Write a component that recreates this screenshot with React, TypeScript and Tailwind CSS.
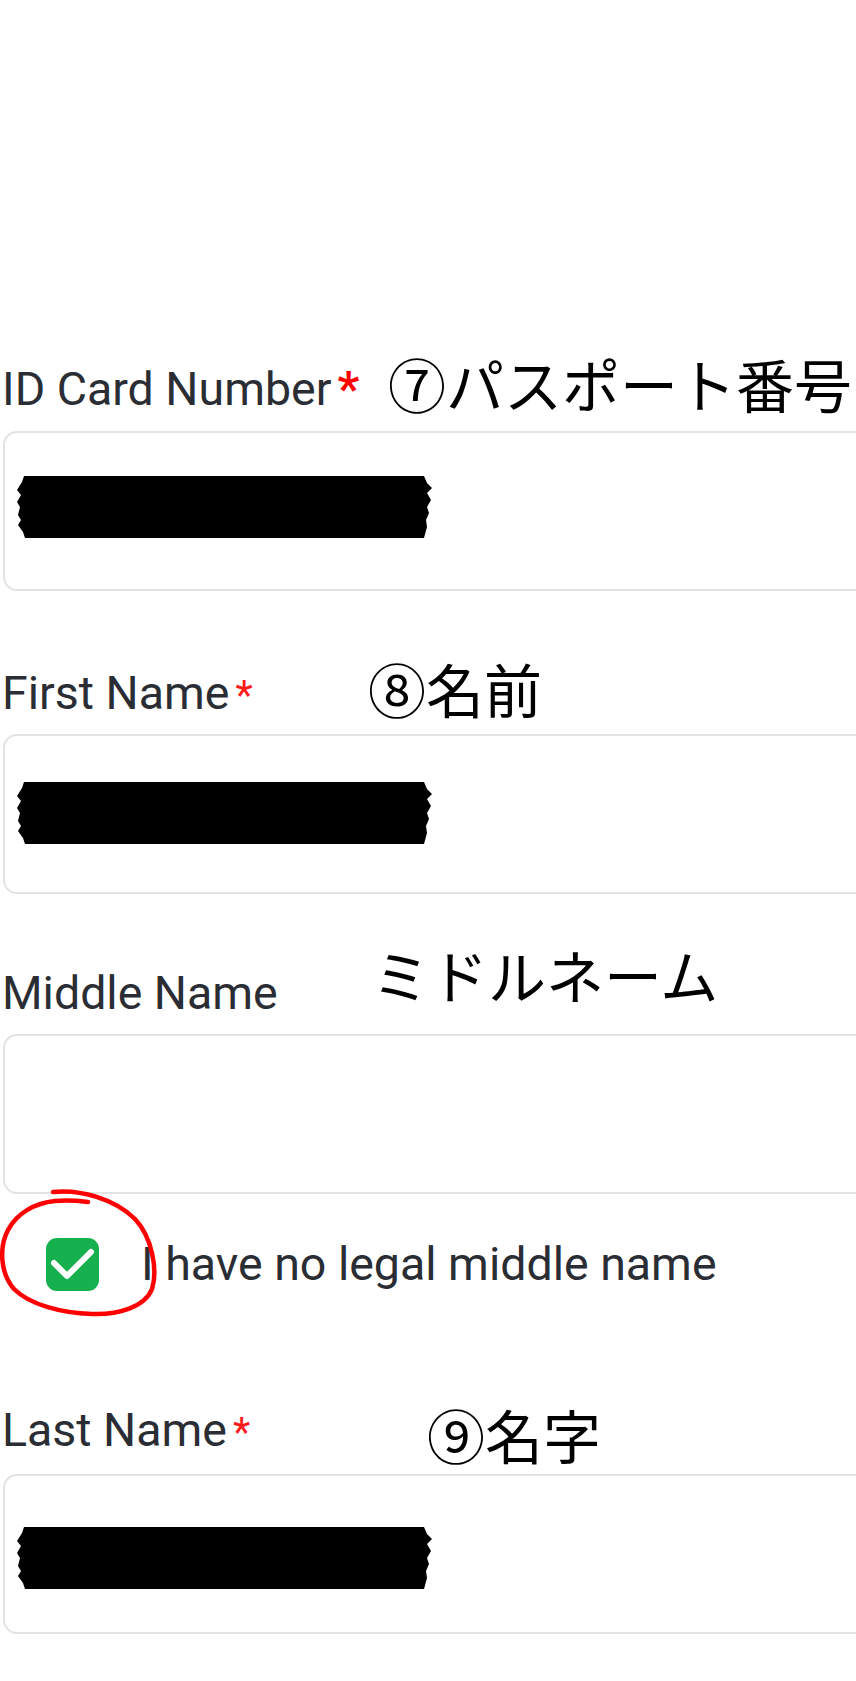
import React from 'react';

// Redaction strip drawn over the filled-in values
function Redacted({ top }: { top: number }) {
  return (
    <div className="ml-[11px]" style={{ paddingTop: top }}>
      <svg width="418" height="62" viewBox="0 0 418 62" className="block">
        <path
          d="M8 0 L408 0 L411 7 L416 12 L411 17 L415 24 L411 31 L413 37 L410 44 L411 51 L408 62 L9 62 L7 56 L2 49 L5 44 L2 39 L4 31 L1 26 L5 19 L1 14 L6 6 Z"
          fill="#000"
        />
      </svg>
    </div>
  );
}

function Label({
  text,
  required,
  big,
  note,
  noteLeft,
  noteTop,
}: {
  text: string;
  required?: boolean;
  big?: boolean;
  note: string;
  noteLeft: number;
  noteTop: number;
}) {
  return (
    <div className="relative h-[54px] pl-[2px] text-[46.5px] leading-[54px] text-[#2a2d33] whitespace-nowrap">
      {text}
      {required && (
        <span
          className={
            big
              ? 'ml-[6px] text-[48px] font-bold text-[#ff0000]'
              : 'ml-[6px] text-[40px] text-[#ff1a1a]'
          }
        >
          *
        </span>
      )}
      {/* annotation written over the screenshot */}
      <span
        className="absolute text-[58px] leading-none text-black font-['Noto_Sans_CJK_JP',sans-serif] whitespace-nowrap"
        style={{ left: noteLeft, top: noteTop }}
      >
        {note}
      </span>
    </div>
  );
}

function Field({ children }: { children?: React.ReactNode }) {
  return (
    <div className="ml-[3px] w-[900px] h-[160px] border-2 border-[#e3e3e3] rounded-[14px] bg-white">
      {children}
    </div>
  );
}

export default function App() {
  return (
    <div className="w-[856px] min-h-[1681px] overflow-hidden bg-white pt-[362px] font-['Roboto',sans-serif]">
      <Label text="ID Card Number" required big note="⑦パスポート番号" noteLeft={388} noteTop={-8} />
      <div className="mt-[15px]">
        <Field>
          <Redacted top={43} />
        </Field>
      </div>

      <div className="mt-[75px]">
        <Label text="First Name" required note="⑧名前" noteLeft={368} noteTop={-7} />
      </div>
      <div className="mt-[14px]">
        <Field>
          <Redacted top={46} />
        </Field>
      </div>

      <div className="mt-[72px]">
        <Label text="Middle Name" note="ミドルネーム" noteLeft={372} noteTop={-21} />
      </div>
      <div className="mt-[14px]">
        <Field />
      </div>

      {/* checkbox row */}
      <div className="relative mt-[43px] h-[54px] flex items-center pl-[46px]">
        <div className="w-[53px] h-[53px] rounded-[11px] bg-[#17b04f] flex items-center justify-center">
          <svg width="53" height="53" viewBox="0 0 53 53">
            <path d="M8 25 L21 38 L45 14" fill="none" stroke="#fff" strokeWidth="6" strokeLinecap="round" strokeLinejoin="round" />
          </svg>
        </div>
        <span className="ml-[42px] text-[46.5px] leading-[54px] text-[#2a2d33] whitespace-nowrap">
          I have no legal middle name
        </span>
        <svg
          width="165"
          height="140"
          viewBox="0 0 165 140"
          className="absolute left-0 top-[-52px] overflow-visible"
        >
          <path
            d="M53 7 C80 4, 115 14, 135 34 C152 52, 158 85, 152 104 C145 122, 118 130, 92 129 C62 128, 30 120, 14 104 C0 88, -1 62, 8 45 C17 28, 35 18, 55 16 C68 15, 80 16, 88 17"
            fill="none"
            stroke="#f00"
            strokeWidth="4.5"
            strokeLinecap="round"
          />
        </svg>
      </div>

      <div className="mt-[112px]">
        <Label text="Last Name" required note="⑨名字" noteLeft={427} noteTop={2} />
      </div>
      <div className="mt-[17px]">
        <Field>
          <Redacted top={51} />
        </Field>
      </div>
    </div>
  );
}
